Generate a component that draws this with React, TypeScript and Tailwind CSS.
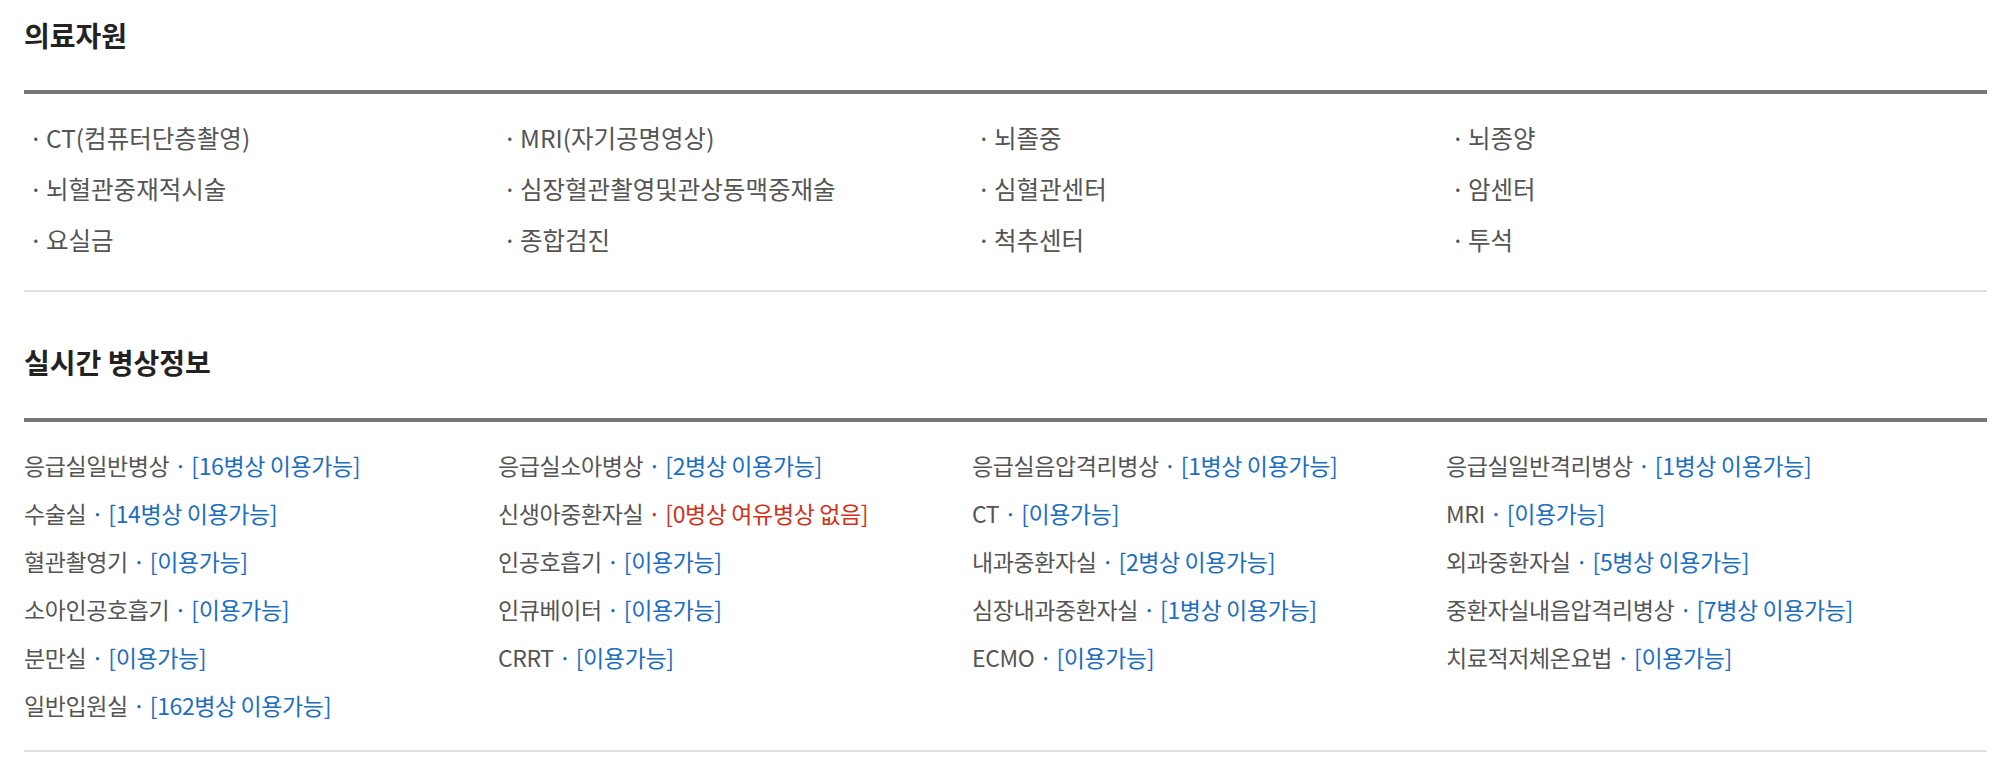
import React from "react";

type Bed = { name: string; status: string; full?: boolean };

const resources = [
  "CT(컴퓨터단층촬영)",
  "MRI(자기공명영상)",
  "뇌졸중",
  "뇌종양",
  "뇌혈관중재적시술",
  "심장혈관촬영및관상동맥중재술",
  "심혈관센터",
  "암센터",
  "요실금",
  "종합검진",
  "척추센터",
  "투석",
];

const beds: Bed[] = [
  { name: "응급실일반병상", status: "16병상 이용가능" },
  { name: "응급실소아병상", status: "2병상 이용가능" },
  { name: "응급실음압격리병상", status: "1병상 이용가능" },
  { name: "응급실일반격리병상", status: "1병상 이용가능" },
  { name: "수술실", status: "14병상 이용가능" },
  { name: "신생아중환자실", status: "0병상 여유병상 없음", full: true },
  { name: "CT", status: "이용가능" },
  { name: "MRI", status: "이용가능" },
  { name: "혈관촬영기", status: "이용가능" },
  { name: "인공호흡기", status: "이용가능" },
  { name: "내과중환자실", status: "2병상 이용가능" },
  { name: "외과중환자실", status: "5병상 이용가능" },
  { name: "소아인공호흡기", status: "이용가능" },
  { name: "인큐베이터", status: "이용가능" },
  { name: "심장내과중환자실", status: "1병상 이용가능" },
  { name: "중환자실내음압격리병상", status: "7병상 이용가능" },
  { name: "분만실", status: "이용가능" },
  { name: "CRRT", status: "이용가능" },
  { name: "ECMO", status: "이용가능" },
  { name: "치료적저체온요법", status: "이용가능" },
  { name: "일반입원실", status: "162병상 이용가능" },
];

export default function App() {
  return (
    <div className="w-[2011px] min-h-[763px] bg-white px-[24px] font-['Noto_Sans_CJK_KR','Noto_Sans',sans-serif] text-[#555]">
      <section className="pt-[15px]">
        <h2 className="text-[28px] leading-[40px] font-bold text-[#222] pb-[35px] border-b-4 border-[#777]">의료자원</h2>
        <ul className="grid grid-cols-[repeat(4,474px)] pt-[18px] pb-[25px] border-b-2 border-[#e0e0e0]">
          {resources.map((r) => (
            <li key={r} className="pl-[5px] text-[24.5px] leading-[51px]">
              <span className="inline-block w-[17px]">·</span>
              {r}
            </li>
          ))}
        </ul>
      </section>
      <section className="pt-[50px]">
        <h2 className="text-[28px] leading-[40px] font-bold text-[#222] pb-[36px] border-b-4 border-[#777]">실시간 병상정보</h2>
        <ul className="grid grid-cols-[repeat(4,474px)] pt-[19px] pb-[21px] border-b-2 border-[#e0e0e0]">
          {beds.map((b) => (
            <li key={b.name} className="text-[23px] leading-[48px] tracking-[-0.4px]">
              {b.name}
              <span className={b.full ? "text-[#d3321a]" : "text-[#1b6ec2]"}>
                {" · ["}
                {b.status}
                {"]"}
              </span>
            </li>
          ))}
        </ul>
      </section>
    </div>
  );
}
